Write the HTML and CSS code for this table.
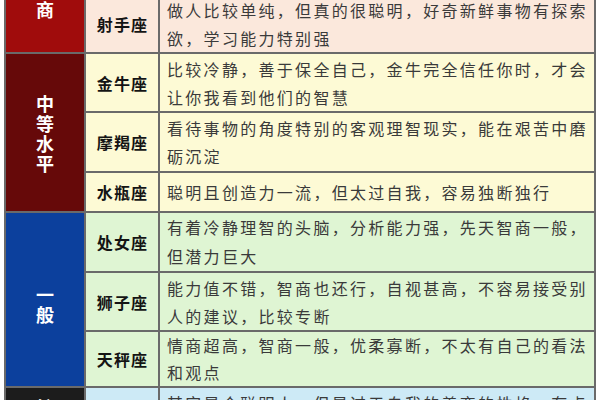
FILE: index.html
```html
<!DOCTYPE html>
<html lang="zh-CN">
<head>
<meta charset="utf-8">
<link rel="stylesheet" href="styles.css">
</head>
<body>
<table class="iq">
  <colgroup>
    <col class="c-group">
    <col class="c-name">
    <col class="c-desc">
  </colgroup>
  <tbody>
    <tr class="r-high r-h70">
      <td class="group g-red" rowspan="2"><span class="vlabel">高<br>智<br>商</span></td>
      <td class="name">双子座</td>
      <td class="desc">思维敏捷，反应很快，脑袋里总有各种奇思妙想，学习新东西非常快</td>
    </tr>
    <tr class="r-high r-h58">
      <td class="name">射手座</td>
      <td class="desc">做人比较单纯，但真的很聪明，好奇新鲜事物有探索欲，学习能力特别强</td>
    </tr>
    <tr class="r-mid r-h59">
      <td class="group g-maroon" rowspan="3"><span class="vlabel">中<br>等<br>水<br>平</span></td>
      <td class="name">金牛座</td>
      <td class="desc">比较冷静，善于保全自己，金牛完全信任你时，才会让你我看到他们的智慧</td>
    </tr>
    <tr class="r-mid r-h60">
      <td class="name">摩羯座</td>
      <td class="desc">看待事物的角度特别的客观理智现实，能在艰苦中磨砺沉淀</td>
    </tr>
    <tr class="r-mid r-h40">
      <td class="name">水瓶座</td>
      <td class="desc">聪明且创造力一流，但太过自我，容易独断独行</td>
    </tr>
    <tr class="r-low r-h60 r-loose">
      <td class="group g-blue" rowspan="3"><span class="vlabel vlabel-low">一<br>般</span></td>
      <td class="name">处女座</td>
      <td class="desc">有着冷静理智的头脑，分析能力强，先天智商一般，但潜力巨大</td>
    </tr>
    <tr class="r-low r-h59">
      <td class="name">狮子座</td>
      <td class="desc">能力值不错，智商也还行，自视甚高，不容易接受别人的建议，比较专断</td>
    </tr>
    <tr class="r-low r-h56 r-tight">
      <td class="name">天秤座</td>
      <td class="desc">情商超高，智商一般，优柔寡断，不太有自己的看法和观点</td>
    </tr>
    <tr class="r-last r-h60">
      <td class="group g-dark"><span class="vlabel">较<br>低</span></td>
      <td class="name">双鱼座</td>
      <td class="desc">其实是个聪明人，但是过于自我的善变的性格，有点让人捉摸不透</td>
    </tr>
  </tbody>
</table>
</body>
</html>
```

FILE: styles.css
```css
html, body {
  margin: 0;
  padding: 0;
  background: #ffffff;
  overflow: hidden;
}

body {
  width: 600px;
  height: 400px;
  font-family: "Noto Sans CJK SC", "Noto Sans", sans-serif;
}

.iq {
  border-collapse: collapse;
  table-layout: fixed;
  width: 590px;
  margin: -76px 0 0 4px;
  border: 2px solid #6a6a6a;
  border-left: 1px solid #9a9a9a;
}

.c-group { width: 80px; }
.c-name { width: 74px; }
.c-desc { width: 436px; }

.iq td {
  border: 2px solid #6a6a6a;
  padding: 0;
  vertical-align: middle;
}

.group {
  text-align: center;
  color: #ffffff;
  font-weight: 700;
  font-size: 18px;
  line-height: 20px;
}

.vlabel { display: inline-block; }
.vlabel-low { margin-top: 8px; }

.g-red { background: #a00c0c; }
.g-maroon { background: #660909; }
.g-blue { background: #0c409d; }
.g-dark { background: #1c1c1c; }

.name {
  text-align: center;
  font-weight: 700;
  font-size: 16px;
  letter-spacing: 1.2px;
  text-indent: 1px;
  color: #141414;
}

.desc {
  font-size: 16px;
  line-height: 28px;
  letter-spacing: 2.3px;
  color: #3a3a3a;
  padding: 0 4px 0 7px !important;
}

.r-loose .desc { line-height: 29px; }
.r-tight .desc { line-height: 27px; }

.r-high td.name, .r-high td.desc { background: #fbe8dc; }
.r-mid td.name, .r-mid td.desc { background: #fdfad5; }
.r-low td.name, .r-low td.desc { background: #dff5d3; }
.r-last td.name, .r-last td.desc { background: #cdeaf6; }

.r-h70 { height: 70px; }
.r-h58 { height: 58px; }
.r-h59 { height: 59px; }
.r-h60 { height: 60px; }
.r-h56 { height: 56px; }
.r-h40 { height: 40px; }
```
